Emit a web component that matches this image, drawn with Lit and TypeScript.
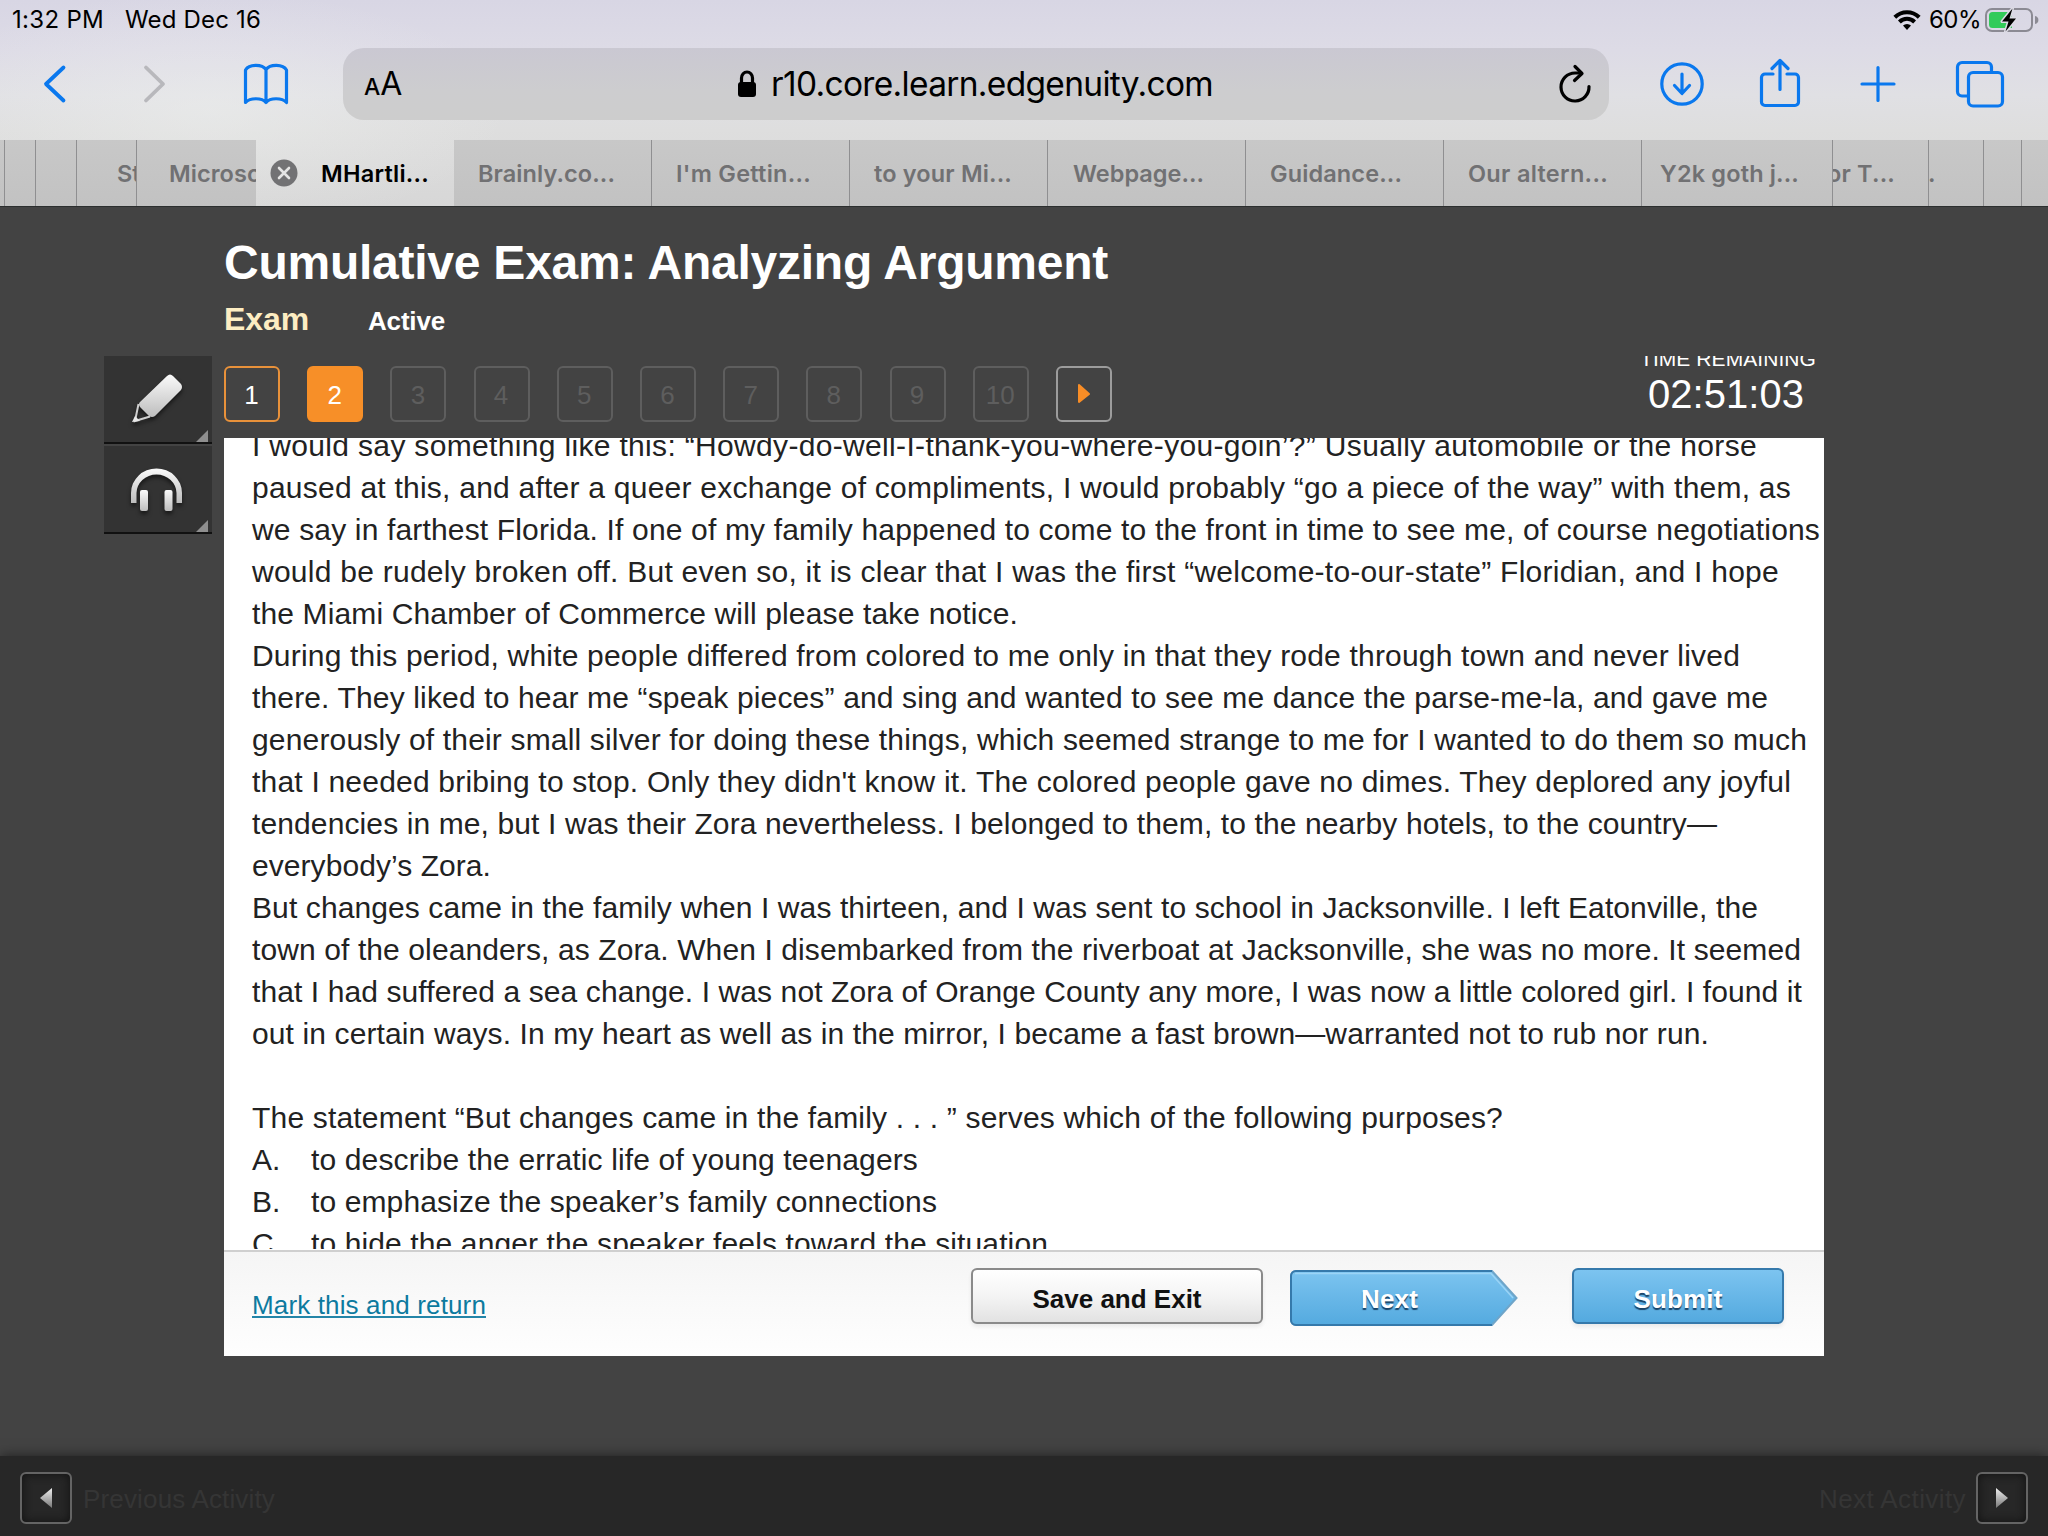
import { LitElement, html, css, svg, nothing } from "lit";
import { customElement, property } from "lit/decorators.js";
import { classMap } from "lit/directives/class-map.js";
import { styleMap } from "lit/directives/style-map.js";

interface Tab {
    label: string;
    width: number;
    pad?: number;
    fit?: number;
    active?: boolean;
}

interface Line {
    text: string;
    fit: number;
}

const TABS: Tab[] = [
    { label: "", width: 5 },
    { label: "", width: 31 },
    { label: "", width: 41 },
    { label: "St", width: 60, pad: 40 },
    { label: "Microsoft", width: 119, pad: 32, fit: 109 },
    { label: "MHartli...", width: 198, pad: 23, fit: 108, active: true },
    { label: "Brainly.co...", width: 198, pad: 24, fit: 137 },
    { label: "I'm Gettin...", width: 198, pad: 24, fit: 135 },
    { label: "to your Mi...", width: 198, pad: 24, fit: 138 },
    { label: "Webpage...", width: 198, pad: 25, fit: 131 },
    { label: "Guidance...", width: 198, pad: 24, fit: 132 },
    { label: "Our altern...", width: 198, pad: 24, fit: 140 },
    { label: "Y2k goth j...", width: 191, pad: 18, fit: 139 },
    { label: "or T...", width: 96, pad: -6, fit: 68 },
    { label: ".", width: 55, pad: -1 },
    { label: "", width: 38 },
    { label: "", width: 27 },
];

const PASSAGE: Line[] = [
    { text: "I would say something like this: “Howdy-do-well-I-thank-you-where-you-goin’?” Usually automobile or the horse", fit: 1505 },
    { text: "paused at this, and after a queer exchange of compliments, I would probably “go a piece of the way” with them, as", fit: 1539 },
    { text: "we say in farthest Florida. If one of my family happened to come to the front in time to see me, of course negotiations", fit: 1568 },
    { text: "would be rudely broken off. But even so, it is clear that I was the first “welcome-to-our-state” Floridian, and I hope", fit: 1527 },
    { text: "the Miami Chamber of Commerce will please take notice.", fit: 766 },
    { text: "During this period, white people differed from colored to me only in that they rode through town and never lived", fit: 1488 },
    { text: "there. They liked to hear me “speak pieces” and sing and wanted to see me dance the parse-me-la, and gave me", fit: 1516 },
    { text: "generously of their small silver for doing these things, which seemed strange to me for I wanted to do them so much", fit: 1555 },
    { text: "that I needed bribing to stop. Only they didn't know it. The colored people gave no dimes. They deplored any joyful", fit: 1539 },
    { text: "tendencies in me, but I was their Zora nevertheless. I belonged to them, to the nearby hotels, to the country—", fit: 1465 },
    { text: "everybody’s Zora.", fit: 239 },
    { text: "But changes came in the family when I was thirteen, and I was sent to school in Jacksonville. I left Eatonville, the", fit: 1506 },
    { text: "town of the oleanders, as Zora. When I disembarked from the riverboat at Jacksonville, she was no more. It seemed", fit: 1549 },
    { text: "that I had suffered a sea change. I was not Zora of Orange County any more, I was now a little colored girl. I found it", fit: 1550 },
    { text: "out in certain ways. In my heart as well as in the mirror, I became a fast brown—warranted not to rub nor run.", fit: 1457 },
];

const QUESTION: Line = {
    text: "The statement “But changes came in the family . . . ” serves which of the following purposes?",
    fit: 1251,
};

const ANSWERS: Line[] = [
    { text: "to describe the erratic life of young teenagers", fit: 607 },
    { text: "to emphasize the speaker’s family connections", fit: 626 },
    { text: "to hide the anger the speaker feels toward the situation", fit: 737 },
];

// One line of text, letter-spaced so that it fills the given width.
@customElement("fit-text")
export class FitText extends LitElement {
    @property({ type: Number }) width = 0;
    @property() text = "";

    static styles = css`
        :host {
            display: inline-block;
            white-space: pre;
            vertical-align: top;
        }
    `;

    firstUpdated() {
        if (!this.width) return;
        const natural = this.getBoundingClientRect().width;
        const spacing = (this.width - natural) / this.text.length;
        this.style.letterSpacing = `${spacing.toFixed(4)}px`;
    }

    render() {
        return html`${this.text}`;
    }
}

@customElement("safari-chrome")
export class SafariChrome extends LitElement {
    static styles = css`
        :host {
            display: block;
            height: 206px;
            background: radial-gradient(
                    ellipse 300px 120px at 210px 110px,
                    rgba(240, 242, 240, 0.45),
                    rgba(240, 242, 240, 0)
                ),
                linear-gradient(
                    #d8d6e4 0,
                    #dddbe6 50px,
                    #e0e0e4 95px,
                    #dedede 130px,
                    #d7d7d7 206px
                );
            font-family: Inter, "Liberation Sans", sans-serif;
            color: #000;
        }

        svg {
            display: block;
            flex: none;
            fill: none;
            stroke: #0a78ee;
            stroke-width: 3.2;
            stroke-linecap: round;
            stroke-linejoin: round;
        }

        .status {
            height: 39px;
            display: flex;
            align-items: center;
            padding: 0 12px;
            font-size: 24px;
            line-height: 39px;
        }

        .date {
            margin-left: 21px;
        }

        .spacer {
            flex: 1;
        }

        .wifi {
            margin-right: 8px;
            stroke: #000;
            stroke-width: 4;
            stroke-linecap: butt;
        }

        .battery {
            margin: 0 -3px 0 4px;
            stroke: none;
        }

        .toolbar {
            height: 90px;
            margin-bottom: 11px;
            display: flex;
            align-items: center;
            padding-left: 42px;
        }

        .back,
        .forward {
            stroke-width: 3.8;
        }

        .forward {
            margin-left: 74px;
            stroke: #b8b8bc;
        }

        .book {
            margin-left: 74px;
        }

        .address {
            width: 1266px;
            height: 72px;
            margin: 0 49px 0 53px;
            border-radius: 21px;
            background: linear-gradient(#cac8d2, #cdcdcf 60%, #cdcdcd);
            display: flex;
            align-items: center;
            box-sizing: border-box;
            padding: 0 18px 0 21px;
            line-height: 72px;
        }

        .reader {
            display: flex;
            align-items: baseline;
            width: 373px;
            padding-top: 2px;
            font-size: 32px;
        }

        .reader .small {
            font-size: 23px;
            font-weight: 500;
        }

        .lock {
            stroke: #000;
            margin-right: 14px;
        }

        .url {
            font-size: 33.5px;
        }

        .reload {
            stroke: #000;
        }

        .share {
            margin-left: 50px;
        }

        .plus {
            margin-left: 50px;
        }

        .windows {
            margin-left: 51px;
        }

        .tabs {
            display: flex;
            height: 66px;
        }

        .tab {
            flex: none;
            box-sizing: border-box;
            height: 66px;
            overflow: hidden;
            border-right: 1px solid #8f8f91;
            background: linear-gradient(#c8c8c8, #c2c2c2);
            color: #717173;
            font-size: 23.5px;
            font-weight: 600;
            line-height: 65px;
            display: flex;
            align-items: center;
            white-space: nowrap;
        }

        .tab.active {
            background: none;
            border: 0;
            color: #000;
        }

        .tab.flush {
            border-right: 0;
        }

        .close {
            margin-left: 14px;
            stroke: #e4e4e4;
            stroke-width: 2.6;
        }
    `;

    renderTab(tab: Tab, i: number) {
        const flush = Boolean(TABS[i + 1]?.active) || i === TABS.length - 1;
        return html`
            <div
                class=${classMap({ tab: true, active: !!tab.active, flush })}
                style=${styleMap({ width: `${tab.width}px` })}
            >
                ${tab.active
                    ? html`<svg class="close" width="28" height="28" viewBox="0 0 28 28">
                          <circle cx="14" cy="14" r="13.5" fill="#727274" stroke="none" />
                          <path d="M9 9l10 10M19 9L9 19" />
                      </svg>`
                    : nothing}
                ${tab.label
                    ? html`<fit-text
                          style=${styleMap({ marginLeft: `${tab.pad ?? 0}px` })}
                          .width=${tab.fit ?? 0}
                          .text=${tab.label}
                      ></fit-text>`
                    : nothing}
            </div>
        `;
    }

    render() {
        return html`
            <div class="status">
                <fit-text .width=${92} .text=${"1:32 PM"}></fit-text>
                <fit-text class="date" .width=${136} .text=${"Wed Dec 16"}></fit-text>
                <span class="spacer"></span>
                <svg class="wifi" width="28" height="22" viewBox="0 0 28 22">
                    <path d="M1.8 8.2a17.4 17.4 0 0 1 24.4 0" />
                    <path d="M6.4 13a10.8 10.8 0 0 1 15.2 0" />
                    <path d="M14 21l-4-4.4a5.6 5.6 0 0 1 8 0z" fill="#000" stroke="none" />
                </svg>
                <fit-text .width=${52} .text=${"60%"}></fit-text>
                <svg class="battery" width="54" height="26" viewBox="0 0 54 26">
                    <rect x="1" y="2" width="46" height="22" rx="6" stroke="#8b8a93" stroke-width="2" />
                    <path d="M50 9c2.4.6 3.4 2 3.4 4s-1 3.4-3.4 4z" fill="#8b8a93" />
                    <path d="M7.5 5H27V21H7.5A3.5 3.5 0 0 1 4 17.5V8.5A3.5 3.5 0 0 1 7.5 5z" fill="#33cb5a" />
                    <path
                        d="M27.5 1.5L17 14.5h6.5l-3 10L31 11.5h-6.5z"
                        fill="#000"
                        stroke="#dcdbe5"
                        stroke-width="3"
                        paint-order="stroke"
                    />
                </svg>
            </div>

            <div class="toolbar">
                <svg class="back" width="26" height="40" viewBox="0 0 26 40">
                    <path d="M21.5 3.5L4 20 21.5 36.5" />
                </svg>
                <svg class="forward" width="26" height="40" viewBox="0 0 26 40">
                    <path d="M4 3.5L21 20 4 36.5" />
                </svg>
                <svg class="book" width="48" height="44" viewBox="0 0 48 44">
                    <path
                        d="M24 7.5C20 2 7 2 3.5 8V40.5C8 35.5 20 35.5 24 40.5C28 35.5 40 35.5 44.5 40.5V8C41 2 28 2 24 7.5zM24 7.5V40.5"
                    />
                </svg>
                <div class="address">
                    <div class="reader"><span class="small">A</span><span>A</span></div>
                    <svg class="lock" width="20" height="28" viewBox="0 0 20 28">
                        <path d="M4.5 13V8a5.5 6 0 0 1 11 0v5" />
                        <rect x="1" y="12" width="18" height="15" rx="3" fill="#000" stroke="none" />
                    </svg>
                    <fit-text class="url" .width=${442} .text=${"r10.core.learn.edgenuity.com"}></fit-text>
                    <span class="spacer"></span>
                    <svg class="reload" width="32" height="40" viewBox="0 0 32 40">
                        <path d="M30 22.5A14 14 0 1 1 16 9h6" />
                        <path d="M16 2.5L23 9.5 15.5 16.5" />
                    </svg>
                </div>
                <svg width="48" height="48" viewBox="0 0 48 48">
                    <circle cx="24" cy="24" r="20.2" />
                    <path d="M24 14V33M16.5 25.5L24 33.5 31.5 25.5" />
                </svg>
                <svg class="share" width="48" height="52" viewBox="0 0 48 52">
                    <path d="M17 16H9a3.5 3.5 0 0 0-3.5 3.5V44A3.5 3.5 0 0 0 9 47.5H39A3.5 3.5 0 0 0 42.5 44V19.5A3.5 3.5 0 0 0 39 16H31" />
                    <path d="M24 31.5V2.5M16 10.5L24 2.5 32 10.5" />
                </svg>
                <svg class="plus" width="48" height="48" viewBox="0 0 48 48">
                    <path d="M24 7.5V40.5M8 24H40" />
                </svg>
                <svg class="windows" width="52" height="50" viewBox="0 0 52 50">
                    <path d="M14 37H9A4.5 4.5 0 0 1 4.5 32.5V8A4.5 4.5 0 0 1 9 3.5H34A4.5 4.5 0 0 1 38.500 8V13" />
                    <rect x="15.500" y="13.500" width="34" height="33.500" rx="4.500" />
                </svg>
            </div>

            <div class="tabs">${TABS.map((tab, i) => this.renderTab(tab, i))}</div>
        `;
    }
}

@customElement("tool-rail")
export class ToolRail extends LitElement {
    static styles = css`
        :host {
            display: flex;
            flex-direction: column;
            gap: 2px;
            width: 108px;
        }

        .tool {
            position: relative;
            height: 88px;
            box-sizing: border-box;
            background: #333;
            border-bottom: 2px solid #111;
        }

        .tool::after {
            content: "";
            position: absolute;
            right: 4px;
            bottom: 0;
            border-left: 12px solid transparent;
            border-bottom: 12px solid #8f8f8f;
        }

        svg {
            display: block;
            filter: drop-shadow(0 3px 2px rgba(0, 0, 0, 0.55));
        }
    `;

    gradient(id: string) {
        return svg`<linearGradient id=${id} x1="0" y1="0" x2="0" y2="1">
            <stop offset="0" stop-color="#fafafa" />
            <stop offset="1" stop-color="#bdbdbd" />
        </linearGradient>`;
    }

    render() {
        return html`
            <div class="tool">
                <svg width="108" height="86" viewBox="0 0 108 86">
                    <defs>${this.gradient("pen")}</defs>
                    <path
                        d="M63 20Q66 17 69 20L77 28Q79 31 77 34L51 60Q48 62 45 60L36 51Q34 48 36 46z"
                        fill="url(#pen)"
                    />
                    <path d="M34.5 48L31 65 46 60.5" fill="none" stroke="#cfcfcf" stroke-width="2" />
                    <path d="M28 66L31 60 36 65z" fill="#e8e8e8" />
                </svg>
            </div>
            <div class="tool">
                <svg width="108" height="86" viewBox="0 0 108 86">
                    <defs>${this.gradient("phones")}</defs>
                    <path
                        d="M27 57V47A25.5 24.5 0 0 1 78 47V57H72.5V47A20 18.500 0 0 0 32.500 47V57z"
                        fill="url(#phones)"
                    />
                    <rect x="36" y="44" width="8" height="21" rx="2" fill="url(#phones)" />
                    <rect x="60.500" y="44" width="8" height="21" rx="2" fill="url(#phones)" />
                </svg>
            </div>
        `;
    }
}

@customElement("question-nav")
export class QuestionNav extends LitElement {
    static styles = css`
        :host {
            display: flex;
            gap: 27.2px;
            padding-top: 10px;
        }

        .step {
            width: 56px;
            height: 56px;
            box-sizing: border-box;
            border: 2px solid #5e5e5e;
            border-radius: 6px;
            padding-right: 1px;
            color: #5e5e5e;
            font-size: 26px;
            line-height: 54px;
            text-align: center;
        }

        .step.done {
            border-color: #e8913a;
            color: #fff;
        }

        .step.current {
            border-color: #f78f28;
            background: #f78f28;
            color: #fff;
        }

        .step.next {
            border-color: #9c9c9c;
        }

        svg {
            display: block;
        }
    `;

    render() {
        const steps = Array.from({ length: 10 }, (_, i) => i + 1);
        return html`
            ${steps.map(
                (n) => html`<div
                    class=${classMap({ step: true, done: n === 1, current: n === 2 })}
                >
                    ${n}
                </div>`
            )}
            <div class="step next">
                <svg width="52" height="52" viewBox="0 0 52 52">
                    <path
                        d="M21 17L31 26 21 34z"
                        fill="#f88d26"
                        stroke="#f88d26"
                        stroke-width="2"
                        stroke-linejoin="round"
                    />
                </svg>
            </div>
        `;
    }
}

@customElement("exam-panel")
export class ExamPanel extends LitElement {
    static styles = css`
        :host {
            display: flex;
            flex-direction: column;
            height: 918px;
            background: #fff;
            color: #222;
        }

        .passage {
            height: 811px;
            overflow: hidden;
            padding-left: 28px;
            font-size: 30px;
            line-height: 42px;
        }

        .lines {
            margin-top: -13.4px;
        }

        .line {
            height: 42px;
            white-space: nowrap;
        }

        .question {
            margin-top: 42px;
        }

        .answer {
            display: flex;
        }

        .letter {
            width: 59px;
        }

        .footer {
            flex: 1;
            box-sizing: border-box;
            margin-top: 1px;
            border-top: 2px solid #cfcfcf;
            background: linear-gradient(#f5f5f5, #fefefe);
            display: flex;
            align-items: flex-start;
            padding: 16px 40px 0 28px;
            font-size: 26px;
        }

        .mark {
            flex: 1;
            margin-top: 17px;
            line-height: 40px;
            color: #0d7a9f;
        }

        .mark span {
            display: inline-block;
            height: 31px;
            line-height: 40px;
            border-bottom: 2px solid #2385a8;
        }

        .button {
            height: 56px;
            box-sizing: border-box;
            border: 2px solid #8a8a8a;
            border-radius: 6px;
            background: linear-gradient(#fff, #f4f4f4 50%, #e2e2e2);
            box-shadow: 0 3px 4px rgba(0, 0, 0, 0.07);
            color: #111;
            font-weight: bold;
            line-height: 58px;
            text-align: center;
        }

        .save {
            width: 292px;
        }

        .submit {
            width: 212px;
            margin-left: 54px;
            border-color: #3579ab;
            background: linear-gradient(#7cc4f0, #54aadf);
            color: #fff;
            text-shadow: 0 2px 1px rgba(0, 30, 60, 0.75);
        }

        .next {
            position: relative;
            width: 228px;
            height: 56px;
            margin: 2px 0 0 27px;
            color: #fff;
            font-weight: bold;
            line-height: 58px;
            text-shadow: 0 2px 1px rgba(0, 30, 60, 0.75);
        }

        .next fit-text {
            position: relative;
            margin-left: 71px;
        }

        .next svg {
            position: absolute;
            inset: 0;
        }
    `;

    renderLine(line: Line) {
        return html`<div class="line">
            <fit-text .width=${line.fit} .text=${line.text}></fit-text>
        </div>`;
    }

    render() {
        return html`
            <div class="passage">
                <div class="lines">
                    ${PASSAGE.map((line) => this.renderLine(line))}
                    <div class="question">${this.renderLine(QUESTION)}</div>
                    ${ANSWERS.map(
                        (line, i) => html`<div class="answer">
                            <span class="letter">${"ABC"[i]}.</span>${this.renderLine(line)}
                        </div>`
                    )}
                </div>
            </div>
            <div class="footer">
                <div class="mark">
                    <span><fit-text .width=${234} .text=${"Mark this and return"}></fit-text></span>
                </div>
                <div class="button save">
                    <fit-text .width=${169} .text=${"Save and Exit"}></fit-text>
                </div>
                <div class="next">
                    <svg width="228" height="56" viewBox="0 0 228 56">
                        <defs>
                            <linearGradient id="blue" x1="0" y1="0" x2="0" y2="1">
                                <stop offset="0" stop-color="#7cc4f0" />
                                <stop offset="1" stop-color="#54aadf" />
                            </linearGradient>
                        </defs>
                        <path
                            d="M6 1H202L226.500 28 202 55H6A5 5 0 0 1 1 50V6A5 5 0 0 1 6 1z"
                            fill="url(#blue)"
                            stroke="#6fa5c9"
                            stroke-width="2"
                        />
                        <path
                            d="M202 1H6A5 5 0 0 0 1 6V50A5 5 0 0 0 6 55H202"
                            fill="none"
                            stroke="#3579ab"
                            stroke-width="2"
                        />
                        <path d="M5 3.500H201L223 28" fill="none" stroke="#9bd4f6" stroke-width="1.500" />
                    </svg>
                    <fit-text .width=${57} .text=${"Next"}></fit-text>
                </div>
                <div class="button submit">
                    <fit-text .width=${89} .text=${"Submit"}></fit-text>
                </div>
            </div>
        `;
    }
}

@customElement("activity-bar")
export class ActivityBar extends LitElement {
    static styles = css`
        :host {
            display: flex;
            align-items: flex-start;
            box-sizing: border-box;
            height: 80px;
            padding: 16px 20px 0;
            background: #272727;
            box-shadow: 0 0 12px rgba(0, 0, 0, 0.55);
            color: #353535;
            font-size: 26px;
            line-height: 54px;
        }

        .box {
            width: 52px;
            height: 52px;
            box-sizing: border-box;
            border: 2px solid #646464;
            border-radius: 6px;
            box-shadow: inset 0 0 10px #111;
        }

        svg {
            display: block;
        }

        .previous {
            margin-left: 11px;
            flex: 1;
        }

        .following {
            margin-right: 10px;
        }
    `;

    renderArrow(d: string) {
        return html`<div class="box">
            <svg width="48" height="48" viewBox="0 0 48 48">
                <defs>
                    <linearGradient id="arrow" x1="0" y1="0" x2="0" y2="1">
                        <stop offset="0" stop-color="#f0f0f0" />
                        <stop offset="1" stop-color="#777" />
                    </linearGradient>
                </defs>
                <path d=${d} fill="url(#arrow)" />
            </svg>
        </div>`;
    }

    render() {
        return html`
            ${this.renderArrow("M30 14V34L18 24z")}
            <span class="previous">
                <fit-text .width=${192} .text=${"Previous Activity"}></fit-text>
            </span>
            <span class="following">
                <fit-text .width=${147} .text=${"Next Activity"}></fit-text>
            </span>
            ${this.renderArrow("M18 14V34L30 24z")}
        `;
    }
}

@customElement("app-root")
export class AppRoot extends LitElement {
    static styles = css`
        :host {
            display: flex;
            flex-direction: column;
            width: 2048px;
            height: 1536px;
            overflow: hidden;
            background: #434343;
            font-family: "Liberation Sans", Arial, sans-serif;
        }

        .page {
            flex: 1;
            box-sizing: border-box;
            border-top: 1px solid #2c2f2f;
        }

        .heading {
            padding: 28px 0 0 224px;
            height: 149px;
            box-sizing: border-box;
            color: #fff;
            font-weight: bold;
        }

        .title {
            font-size: 48px;
            line-height: 56px;
        }

        .subtitle {
            display: flex;
            align-items: baseline;
            margin-top: 8px;
            line-height: 40px;
            font-size: 26px;
        }

        .kind {
            width: 144px;
            font-size: 32px;
            color: #fdedc2;
        }

        .workspace {
            display: flex;
            gap: 12px;
            padding-left: 104px;
        }

        .content {
            width: 1600px;
        }

        .bar {
            display: flex;
            justify-content: space-between;
            height: 82px;
            overflow: hidden;
        }

        .timer {
            width: 178px;
            margin: -9.3px 6px 0 0;
            color: #fff;
            font-size: 21px;
            line-height: 24px;
        }

        .clock {
            margin-top: 1px;
            padding-left: 8px;
            font-size: 40px;
            line-height: 44px;
        }
    `;

    render() {
        return html`
            <safari-chrome></safari-chrome>
            <div class="page">
                <div class="heading">
                    <div class="title">
                        <fit-text .width=${884} .text=${"Cumulative Exam: Analyzing Argument"}></fit-text>
                    </div>
                    <div class="subtitle">
                        <div class="kind"><fit-text .width=${85} .text=${"Exam"}></fit-text></div>
                        <fit-text .width=${77} .text=${"Active"}></fit-text>
                    </div>
                </div>
                <div class="workspace">
                    <tool-rail></tool-rail>
                    <div class="content">
                        <div class="bar">
                            <question-nav></question-nav>
                            <div class="timer">
                                <fit-text .width=${176} .text=${"TIME REMAINING"}></fit-text>
                                <div class="clock">
                                    <fit-text .width=${156} .text=${"02:51:03"}></fit-text>
                                </div>
                            </div>
                        </div>
                        <exam-panel></exam-panel>
                    </div>
                </div>
            </div>
            <activity-bar></activity-bar>
        `;
    }
}
